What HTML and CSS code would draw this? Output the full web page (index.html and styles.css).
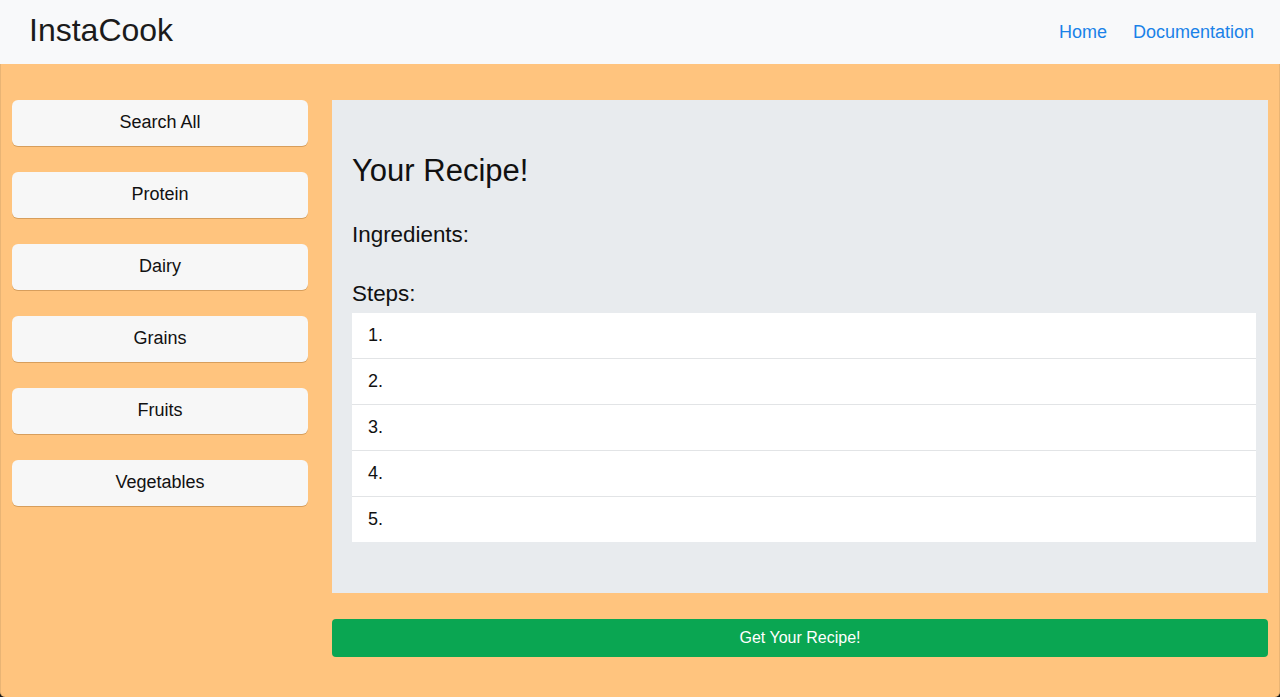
FILE: index.html
```html
<!DOCTYPE html>
<html lang="en">
<head>
<meta charset="utf-8">
<title>InstaCook</title>
<link rel="stylesheet" href="styles.css">
</head>
<body>
<nav class="navbar">
  <a class="brand" href="#">InstaCook</a>
  <div class="nav-links">
    <a href="#">Home</a>
    <a href="#">Documentation</a>
  </div>
</nav>
<main class="page">
  <aside class="sidebar">
    <button class="cat-btn">Search All</button>
    <button class="cat-btn">Protein</button>
    <button class="cat-btn">Dairy</button>
    <button class="cat-btn">Grains</button>
    <button class="cat-btn">Fruits</button>
    <button class="cat-btn">Vegetables</button>
  </aside>
  <section class="content">
    <div class="recipe-panel">
      <h1 class="recipe-title">Your Recipe!</h1>
      <h3 class="section-title">Ingredients:</h3>
      <h3 class="section-title steps-title">Steps:</h3>
      <ul class="steps">
        <li>1.</li>
        <li>2.</li>
        <li>3.</li>
        <li>4.</li>
        <li>5.</li>
      </ul>
    </div>
    <button class="get-btn">Get Your Recipe!</button>
  </section>
</main>
</body>
</html>
```

FILE: styles.css
```css
html {
  background: #1a1a1a;
}
body {
  margin: 0;
  font-family: "Liberation Sans", Arial, sans-serif;
  color: #111;
  background: #1a1a1a;
}
.navbar {
  height: 64px;
  background: #f8f9fa;
  display: flex;
  align-items: center;
  justify-content: space-between;
  padding: 0 26px 0 29px;
  box-sizing: border-box;
}
.brand {
  font-size: 32px;
  color: #1b1b1b;
  text-decoration: none;
  line-height: 36px;
  margin-top: -4px;
}
.nav-links {
  display: flex;
  gap: 26px;
}
.nav-links a {
  font-size: 18px;
  color: #1a82e8;
  text-decoration: none;
  line-height: 22px;
}
.page {
  min-height: calc(100vh - 64px);
  box-sizing: border-box;
  background: #ffc47e;
  border-left: 1px solid #e9b474;
  border-right: 1px solid #e9b474;
  border-radius: 0 0 5px 5px;
  padding: 36px 11px 40px;
  display: flex;
  align-items: flex-start;
  gap: 24px;
}
.sidebar {
  width: 296px;
  flex: none;
  display: flex;
  flex-direction: column;
  gap: 26px;
}
.cat-btn {
  height: 46px;
  border: none;
  border-radius: 6px;
  background: #f7f7f7;
  box-shadow: 0 1px 0 rgba(140, 90, 30, 0.35);
  font-family: inherit;
  font-size: 18px;
  color: #111;
  padding: 0 0 2px;
  text-align: center;
}
.content {
  flex: 1;
  display: flex;
  flex-direction: column;
  gap: 26px;
}
.recipe-panel {
  background: #e8ebee;
  padding: 53px 12px 51px 20px;
}
.recipe-title {
  margin: 0;
  font-size: 31px;
  font-weight: normal;
  line-height: 36px;
  color: #111;
}
.section-title {
  margin: 33px 0 0;
  font-size: 22.4px;
  font-weight: normal;
  line-height: 26px;
  color: #111;
}
.steps {
  list-style: none;
  margin: 5px 0 0;
  padding: 0;
  background: #fff;
}
.steps li {
  height: 46px;
  box-sizing: border-box;
  display: flex;
  align-items: center;
  padding: 0 16px;
  font-size: 18px;
  border-top: 1px solid #e2e4e6;
}
.steps li:first-child {
  border-top-color: #e8ebee;
}
.get-btn {
  height: 38px;
  border: none;
  border-radius: 4px;
  background: #0aa652;
  color: #fff;
  font-family: inherit;
  font-size: 16px;
  padding: 0;
}
```
